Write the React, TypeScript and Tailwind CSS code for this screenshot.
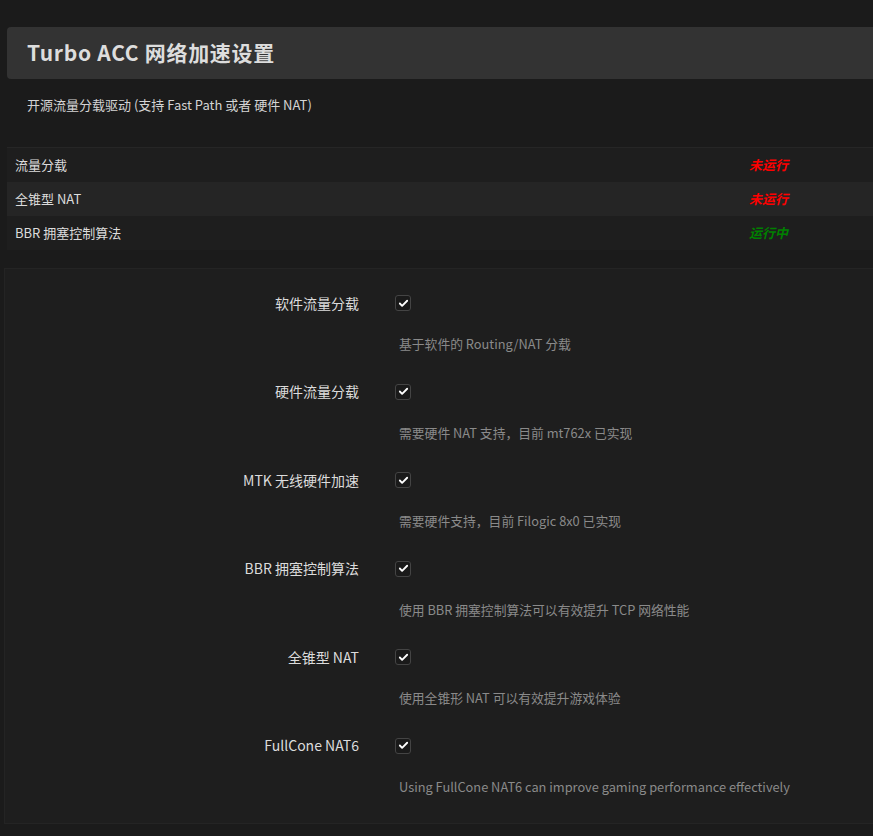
import { Check } from 'lucide-react';

const font = { fontFamily: '"Noto Sans CJK SC", "Noto Sans", sans-serif' };

const statusRows = [
  { name: '流量分载', status: '未运行', ok: false },
  { name: '全锥型 NAT', status: '未运行', ok: false },
  { name: 'BBR 拥塞控制算法', status: '运行中', ok: true },
];

const options = [
  { label: '软件流量分载', desc: '基于软件的 Routing/NAT 分载' },
  { label: '硬件流量分载', desc: '需要硬件 NAT 支持，目前 mt762x 已实现' },
  { label: 'MTK 无线硬件加速', desc: '需要硬件支持，目前 Filogic 8x0 已实现' },
  { label: 'BBR 拥塞控制算法', desc: '使用 BBR 拥塞控制算法可以有效提升 TCP 网络性能' },
  { label: '全锥型 NAT', desc: '使用全锥形 NAT 可以有效提升游戏体验' },
  { label: 'FullCone NAT6', desc: 'Using FullCone NAT6 can improve gaming performance effectively' },
];

const App = () => {
  return (
    <div className="w-[873px] h-[836px] overflow-hidden bg-[#1b1b1b] text-[#dcdcdc]" style={font}>
      <div className="w-[900px] pl-[7px] pt-[27px]">
        {/* 标题 */}
        <div className="h-[52px] bg-[#333333] rounded-l-[4px] flex items-center pl-[20px]">
          <h2 className="text-[21px] font-semibold text-[#dddddd] tracking-[0.7px]">Turbo ACC 网络加速设置</h2>
        </div>

        <p className="mt-[16px] pl-[20px] h-[20px] leading-[20px] text-[13px] text-[#d4d4d4]">
          开源流量分载驱动 (支持 Fast Path 或者 硬件 NAT)
        </p>

        {/* 状态表 */}
        <div className="mt-[32px] border-t border-[#262626]">
          {statusRows.map((row, i) => (
            <div
              key={row.name}
              className={`flex items-center h-[34px] text-[13px] ${i % 2 === 1 ? 'bg-[#252525]' : 'bg-[#1e1e1e]'}`}
            >
              <div className="w-[742px] pl-[8px] text-[#dcdcdc]">{row.name}</div>
              <div className={`font-bold italic ${row.ok ? 'text-[#008000]' : 'text-[#ff0000]'}`}>{row.status}</div>
            </div>
          ))}
        </div>

        {/* 设置项 */}
        <div className="mt-[18px] -ml-[3px] h-[556px] bg-[#1e1e1e] border border-[#242424] pt-[21px]">
          {options.map((opt) => (
            <div key={opt.label} className="h-[88.6px]">
              <div className="flex items-center h-[26px]">
                <div className="w-[354px] text-right text-[14px] text-[#dcdcdc]">{opt.label}</div>
                <div className="ml-[36px] w-[16px] h-[16px] rounded-[3px] border border-[#444444] bg-[#1a1a1a] flex items-center justify-center">
                  <Check className="w-[11px] h-[11px] text-white" strokeWidth={4} />
                </div>
              </div>
              <div className="mt-[18px] h-[20px] leading-[20px] pl-[394px] text-[12.8px] text-[#8a8a8a]">{opt.desc}</div>
            </div>
          ))}
        </div>
      </div>
    </div>
  );
};

export default App;
